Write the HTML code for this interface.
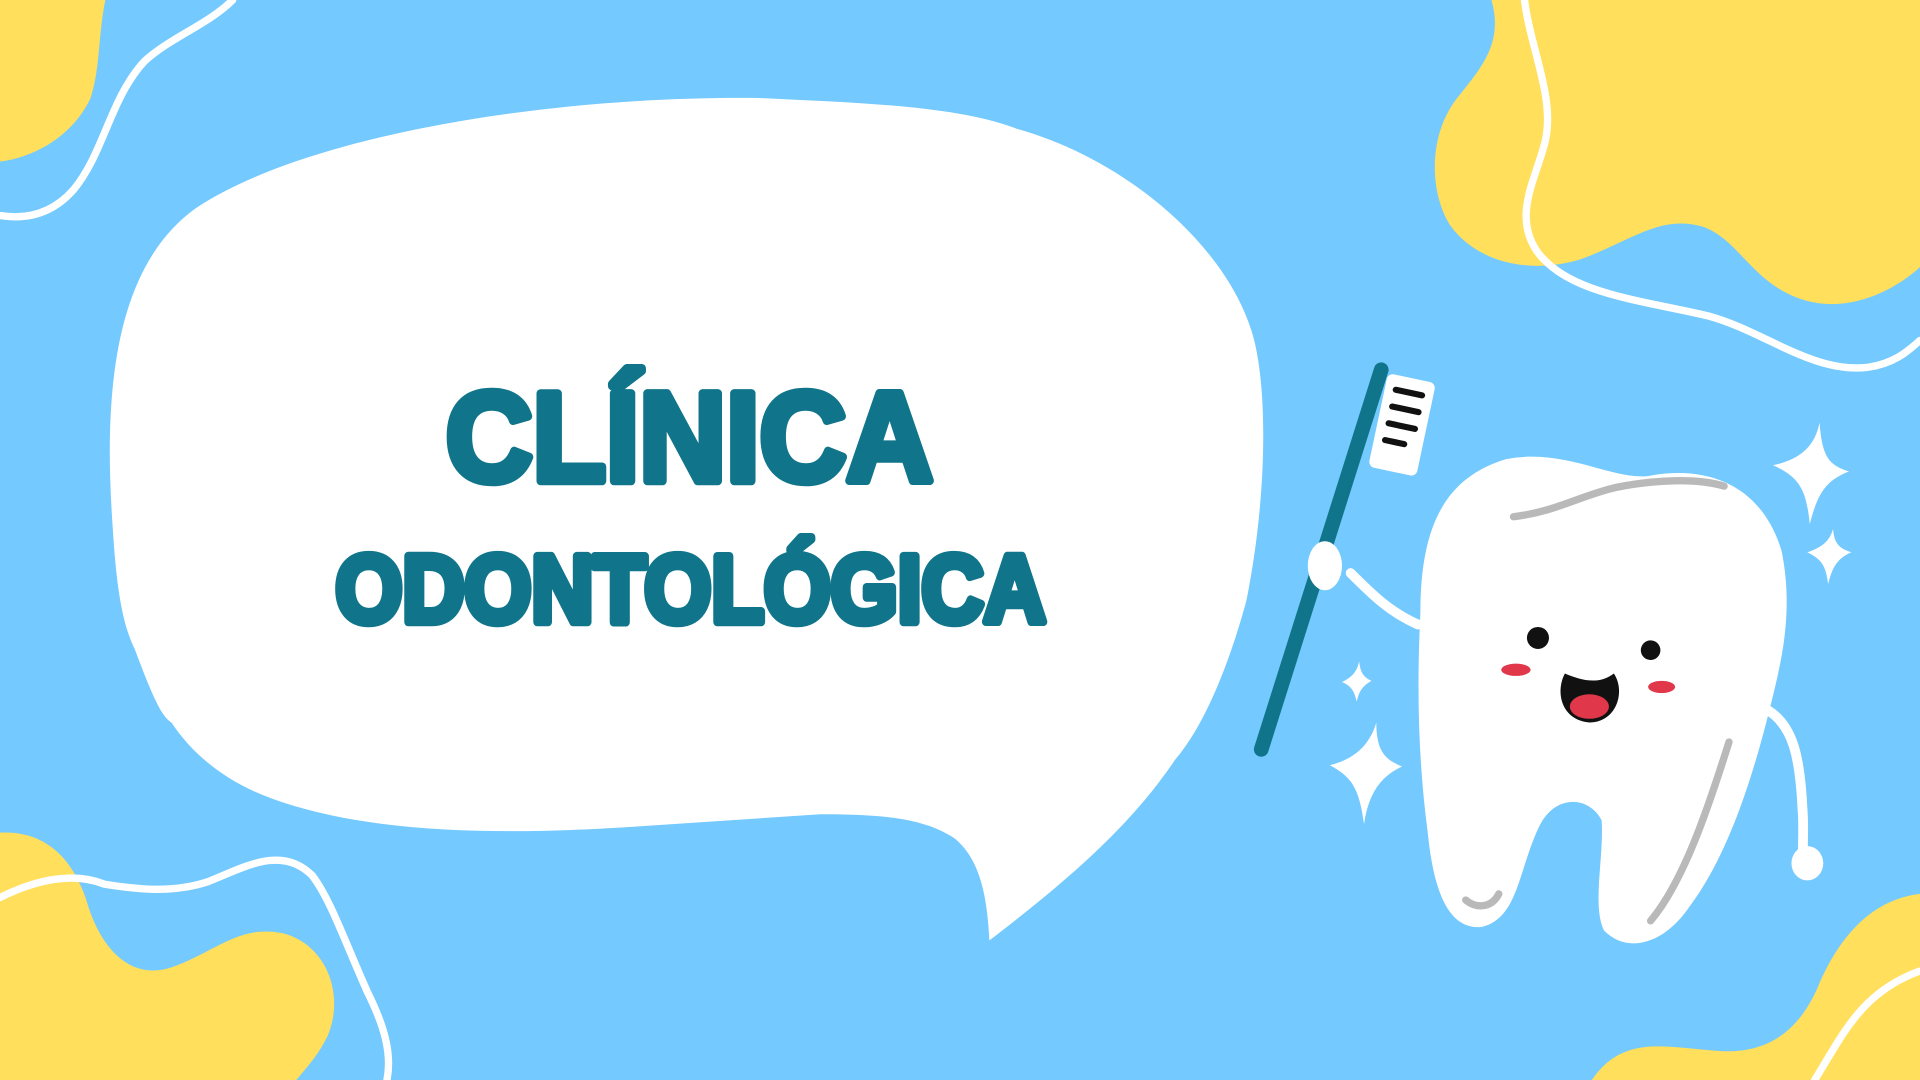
<!DOCTYPE html>
<html><head><meta charset="utf-8"><style>
html,body{margin:0;padding:0;width:1920px;height:1080px;overflow:hidden;background:#74C9FE}
svg{display:block}
</style></head><body>
<svg width="1920" height="1080" viewBox="0 0 1568 882" xmlns="http://www.w3.org/2000/svg">
<rect width="1568" height="882" fill="#74C9FE"/>
<path d="M0,0 L86,0 C80,30 82,55 74,80 C60,110 30,128 0,132 Z" fill="#FFDF5C"/>
<path d="M0,680 C40,678 62,705 72,740 C85,780 110,800 140,790 C175,778 195,755 230,762 C265,770 282,810 268,845 C260,862 250,872 242,882 L0,882 Z" fill="#FFDF5C"/>
<path d="M1218,0 C1228,35 1210,55 1190,80 C1165,112 1168,160 1185,185 C1205,212 1245,225 1290,212 C1330,198 1355,175 1390,185 C1420,195 1430,230 1470,244 C1510,258 1550,235 1568,218 L1568,0 Z" fill="#FFDF5C"/>
<path d="M1568,730 C1525,735 1500,770 1485,805 C1468,845 1440,862 1400,858 C1360,855 1325,845 1300,882 L1568,882 Z" fill="#FFDF5C"/>
<g fill="none" stroke="#fff" stroke-width="6" stroke-linecap="round">
<path d="M190,0 C170,20 140,30 118,50 C90,80 85,125 60,155 C45,172 25,180 0,176"/>
<path d="M0,733 C30,718 60,712 85,722 C110,726 140,730 170,720 C200,708 230,690 255,715 C270,735 280,765 300,810 C315,840 320,862 316,882"/>
<path d="M1245,0 C1250,40 1270,80 1262,115 C1255,145 1235,175 1255,205 C1280,240 1340,245 1395,258 C1440,270 1480,305 1525,300 C1548,297 1560,285 1568,278"/>
<path d="M1482,882 C1505,845 1520,810 1568,793"/>
</g>
<path d="M620,80 C450,78 250,110 160,170 C90,220 85,330 92,430 C95,480 100,510 110,530 C125,570 132,585 140,590 C160,620 190,642 230,655 C320,685 440,680 520,675 L670,665 C720,665 755,668 780,685 C800,702 806,730 808,768 C860,728 920,680 960,620 C990,585 1010,520 1018,490 C1036,400 1035,310 1022,270 C1000,200 920,130 830,105 C780,86 700,84 620,80 Z" fill="#fff"/>
<g fill="#10758A" stroke="#10758A" stroke-width="7" stroke-linejoin="round" font-family="Liberation Sans, sans-serif" font-weight="bold">
<text x="364" y="393" font-size="104" textLength="398" lengthAdjust="spacingAndGlyphs">CLÍNICA</text>
<text x="274" y="508" font-size="78" textLength="580" lengthAdjust="spacingAndGlyphs">ODONTOLÓGICA</text>
</g>
<line x1="1030" y1="612" x2="1128" y2="302" stroke="#10758A" stroke-width="12" stroke-linecap="round"/>
<g transform="rotate(12 1145 347)">
<rect x="1125" y="308" width="40" height="78" rx="5" fill="#fff"/>
<g stroke="#111" stroke-width="5" stroke-linecap="round">
<line x1="1134" y1="320" x2="1156" y2="320"/><line x1="1134" y1="334" x2="1156" y2="334"/>
<line x1="1134" y1="348" x2="1156" y2="348"/><line x1="1134" y1="362" x2="1150" y2="362"/>
</g></g>
<g fill="none" stroke="#fff" stroke-width="8" stroke-linecap="round" stroke-linejoin="round">
<path d="M1158,510 C1135,500 1120,485 1103,468"/>
<path d="M1440,578 C1465,590 1470,620 1472,660 C1474,685 1470,700 1475,710"/>
</g>
<ellipse cx="1082" cy="462" rx="14" ry="20" fill="#fff"/>
<ellipse cx="1476" cy="705" rx="13" ry="14" fill="#fff"/>
<path d="M1160,500 C1160,430 1180,390 1230,375 C1280,365 1320,395 1350,388 C1400,380 1440,400 1455,450 C1465,500 1455,540 1445,580 C1430,640 1410,700 1380,740 C1360,770 1330,780 1310,760 C1300,740 1310,700 1308,670 C1298,650 1270,648 1257,675 C1240,710 1240,750 1210,757 C1180,760 1170,720 1166,680 C1158,620 1157,560 1160,500 Z" fill="#fff"/>
<g fill="none" stroke="#B9B9B9" stroke-width="6" stroke-linecap="round">
<path d="M1236,422 C1270,418 1290,405 1320,398 C1350,392 1385,390 1408,397"/>
<path d="M1348,752 C1375,720 1395,660 1412,606"/>
<path d="M1197,735 C1205,742 1218,742 1224,730"/>
</g>
<circle cx="1256" cy="521" r="9" fill="#111"/>
<circle cx="1348" cy="531" r="8" fill="#111"/>
<ellipse cx="1238" cy="547" rx="12" ry="5" fill="#E0374A"/>
<ellipse cx="1357" cy="561" rx="11" ry="5" fill="#E0374A"/>
<path d="M1278,550 C1290,555 1305,560 1318,550 C1328,565 1320,590 1298,590 C1275,588 1270,565 1278,550 Z" fill="#111"/>
<ellipse cx="1298" cy="577" rx="16" ry="10" fill="#E0374A"/>
<g fill="#fff">
<path d="M1486,345 C1488,375 1495,380 1510,385 C1493,392 1485,400 1478,428 C1475,400 1470,390 1448,380 C1470,375 1482,365 1486,345 Z"/>
<path d="M1497,432 C1498,445 1503,448 1512,451 C1503,455 1497,460 1493,477 C1491,462 1488,457 1476,451 C1488,447 1494,442 1497,432 Z"/>
<path d="M1110,540 C1111,550 1114,553 1120,556 C1113,560 1110,564 1108,573 C1106,564 1103,560 1096,557 C1104,553 1108,549 1110,540 Z"/>
<path d="M1124,590 C1124,612 1130,620 1145,626 C1130,633 1118,645 1114,673 C1110,645 1105,635 1086,625 C1105,620 1118,610 1124,590 Z"/>
</g>
</svg>
</body></html>
